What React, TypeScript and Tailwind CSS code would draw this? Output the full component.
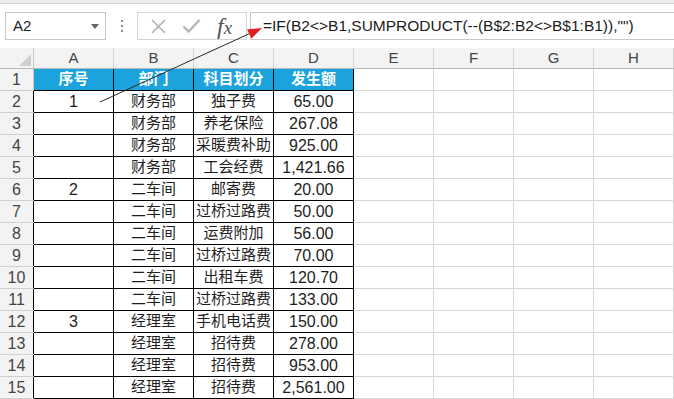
import React from "react";

const data: [string, string, string, string][] = [
  ["1", "财务部", "独子费", "65.00"],
  ["", "财务部", "养老保险", "267.08"],
  ["", "财务部", "采暖费补助", "925.00"],
  ["", "财务部", "工会经费", "1,421.66"],
  ["2", "二车间", "邮寄费", "20.00"],
  ["", "二车间", "过桥过路费", "50.00"],
  ["", "二车间", "运费附加", "56.00"],
  ["", "二车间", "过桥过路费", "70.00"],
  ["", "二车间", "出租车费", "120.70"],
  ["", "二车间", "过桥过路费", "133.00"],
  ["3", "经理室", "手机电话费", "150.00"],
  ["", "经理室", "招待费", "278.00"],
  ["", "经理室", "招待费", "953.00"],
  ["", "经理室", "招待费", "2,561.00"],
];

const letters = ["A", "B", "C", "D", "E", "F", "G", "H"];

function EmptyCells() {
  return (
    <>
      {[0, 1, 2, 3].map((i) => (
        <div key={i} className="w-[80px] h-full shrink-0 border-r border-b border-[#d8d8d8]" />
      ))}
    </>
  );
}

export default function App() {
  return (
    <div className="relative w-[674px] h-[399px] overflow-hidden bg-white font-['Liberation_Sans','Noto_Sans_CJK_SC',sans-serif] text-[#1e1e1e]">
      {/* top strip */}
      <div className="h-[4px] bg-[#ececec] border-b border-[#d2d2d2]" />
      {/* formula toolbar */}
      <div className="h-[44px] flex items-start pt-[8px] bg-white">
        <div className="ml-[5px] w-[101px] h-[28px] border border-[#c8c8c8] flex items-center pl-[7px] pr-[6px]">
          <span className="text-[15px] text-[#222] flex-1">A2</span>
          <svg width="8" height="5" viewBox="0 0 8 5">
            <polygon points="0,0 8,0 4,5" fill="#666" />
          </svg>
        </div>
        <div className="w-[31px] h-[28px] flex flex-col items-center justify-center gap-[3px]">
          <div className="w-[2px] h-[2px] bg-[#888]" />
          <div className="w-[2px] h-[2px] bg-[#888]" />
          <div className="w-[2px] h-[2px] bg-[#888]" />
        </div>
        <div className="w-[110px] h-[28px] border border-[#d4d4d4] flex items-center">
          <svg className="ml-[12px]" width="17" height="17" viewBox="0 0 17 17">
            <path d="M2 2 L15 15 M15 2 L2 15" stroke="#b4b4b4" strokeWidth="1.7" />
          </svg>
          <svg className="ml-[15px]" width="19" height="16" viewBox="0 0 19 16">
            <path d="M1.5 8.5 L6.5 13.5 L17.5 2" stroke="#b4b4b4" strokeWidth="2.4" fill="none" />
          </svg>
          <span className="ml-[16px] font-['Liberation_Serif',serif] italic text-[24px] leading-none text-[#555]">
            f<span className="text-[19px]">x</span>
          </span>
        </div>
        <div className="ml-[3px] flex-1 h-[28px] border border-[#c8c8c8] border-r-0 flex items-center pl-[12px]">
          <span className="text-[15.5px] text-[#1a1a1a] whitespace-nowrap">
            =IF(B2&lt;&gt;B1,SUMPRODUCT(--(B$2:B2&lt;&gt;B$1:B1)),"")
          </span>
        </div>
      </div>
      {/* column header */}
      <div className="h-[21px] flex bg-[#f3f3f3] border-b border-[#b8b8b8]">
        <div className="w-[34px] h-full shrink-0 border-r border-[#c8c8c8] relative">
          <svg className="absolute right-[2px] bottom-[2px]" width="12" height="12" viewBox="0 0 12 12">
            <polygon points="12,0 12,12 0,12" fill="#cfcfcf" />
          </svg>
        </div>
        {letters.map((l) => (
          <div
            key={l}
            className="w-[80px] h-full shrink-0 border-r border-[#d4d4d4] flex items-center justify-center text-[15px] text-[#444]"
          >
            {l}
          </div>
        ))}
      </div>
      {/* row 1 */}
      <div className="h-[22px] flex">
        <div className="w-[34px] h-full shrink-0 bg-[#f3f3f3] border-r border-b border-[#c8c8c8] flex items-center justify-center text-[16px] text-[#444]">
          1
        </div>
        {["序号", "部门", "科目划分", "发生额"].map((t) => (
          <div
            key={t}
            className="w-[80px] h-full shrink-0 bg-[#1ca3dd] border-r border-b border-black flex items-center justify-center text-[15px] font-bold text-white"
          >
            {t}
          </div>
        ))}
        <EmptyCells />
      </div>
      {data.map((r, idx) => (
        <div key={idx} className="h-[22px] flex">
          <div className="w-[34px] h-full shrink-0 bg-[#f3f3f3] border-r border-b border-[#d0d0d0] flex items-center justify-center text-[16px] text-[#444]">
            {idx + 2}
          </div>
          <div className="w-[80px] h-full shrink-0 border-r border-b border-black flex items-center justify-center text-[16px] relative">
            <div className="absolute left-[-1px] top-0 bottom-0 w-px bg-black" />
            {r[0]}
          </div>
          <div className="w-[80px] h-full shrink-0 border-r border-b border-black flex items-center justify-center text-[15px]">
            {r[1]}
          </div>
          <div className="w-[80px] h-full shrink-0 border-r border-b border-black flex items-center justify-center text-[15px] whitespace-nowrap">
            {r[2]}
          </div>
          <div className="w-[80px] h-full shrink-0 border-r border-b border-black flex items-center justify-center text-[16px]">
            {r[3]}
          </div>
          <EmptyCells />
        </div>
      ))}
      {/* arrow annotation */}
      <svg className="absolute left-0 top-0 pointer-events-none" width="674" height="399" viewBox="0 0 674 399">
        <line x1="100" y1="102" x2="253" y2="32" stroke="#2a2a2a" strokeWidth="1" />
        <polygon points="262,28 247,29.5 251.5,38.5" fill="#e01f1f" />
      </svg>
    </div>
  );
}
